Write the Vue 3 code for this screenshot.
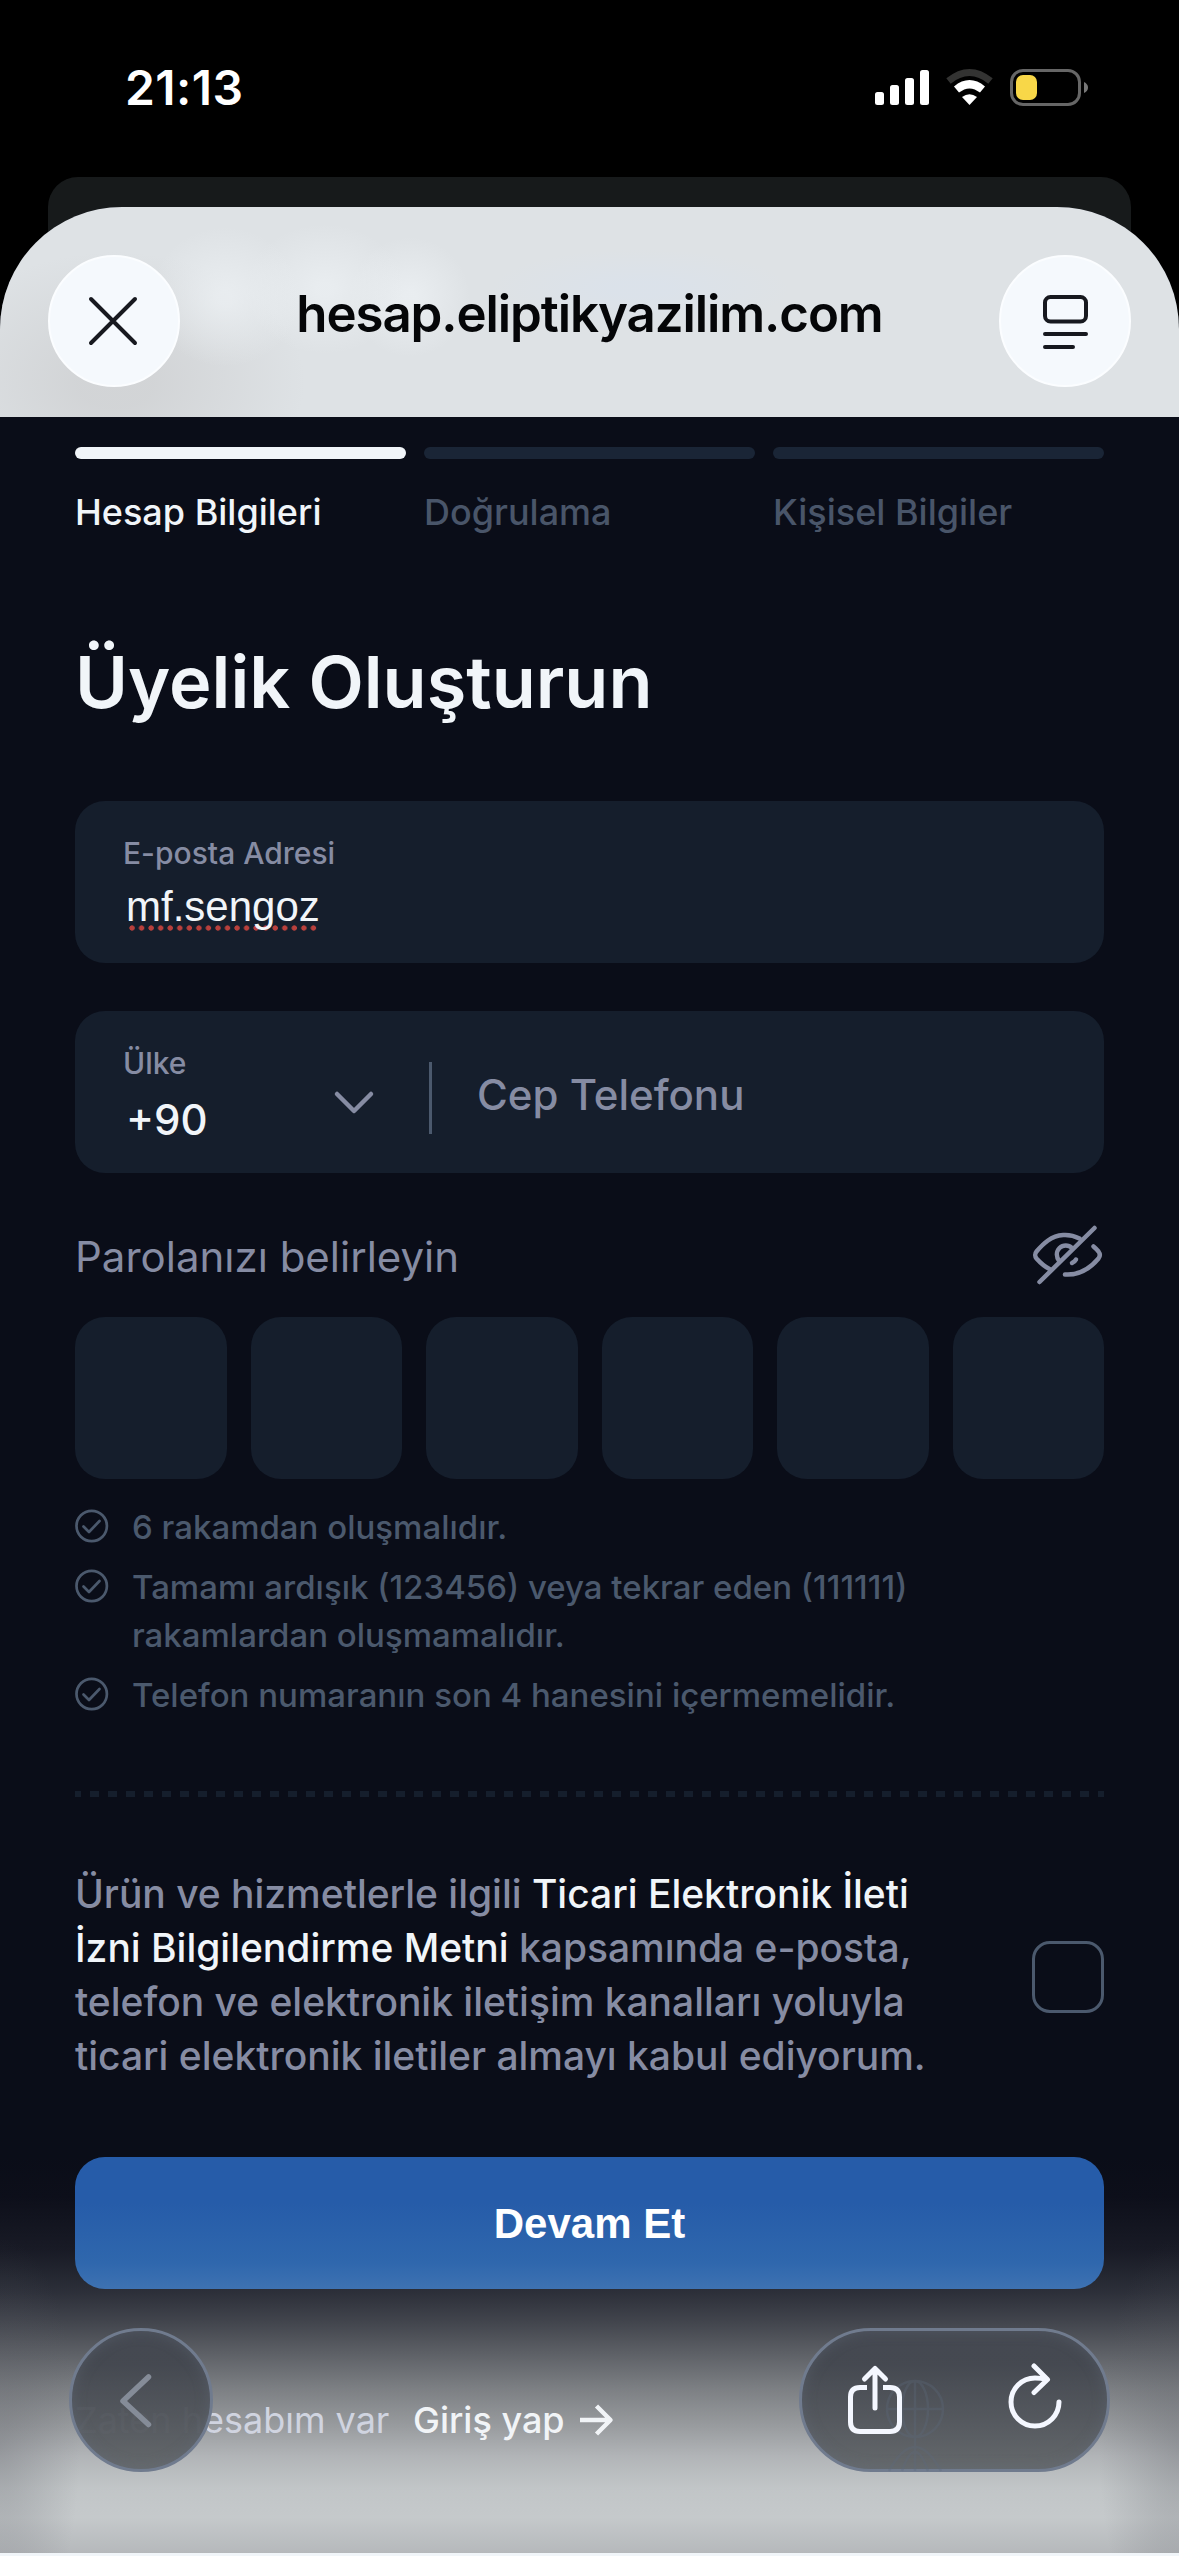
<script setup>
const steps = [
  { label: 'Hesap Bilgileri', active: true },
  { label: 'Doğrulama', active: false },
  { label: 'Kişisel Bilgiler', active: false },
]
const rules = [
  ['6 rakamdan oluşmalıdır.'],
  ['Tamamı ardışık (123456) veya tekrar eden (111111)', 'rakamlardan oluşmamalıdır.'],
  ['Telefon numaranın son 4 hanesini içermemelidir.'],
]
</script>

<template>
  <div class="screen">
    <header class="status">
      <span class="time">21:13</span>
      <svg class="status-icons" width="216" height="40" viewBox="0 0 216 40">
        <g fill="#fff">
          <rect x="1" y="24" width="9" height="13" rx="2.5" />
          <rect x="16" y="17" width="9" height="20" rx="2.5" />
          <rect x="31" y="10" width="9" height="27" rx="2.5" />
          <rect x="46" y="2" width="9" height="35" rx="2.5" />
        </g>
        <path d="M74.500 13Q95.500 -4 116.500 13" fill="none" stroke="#333332" stroke-width="7" />
        <path d="M82.500 21.500Q95.500 11 108.500 21.500" fill="none" stroke="#fff" stroke-width="8" />
        <path d="M88 29Q95.500 23.500 103 29L95.500 37Z" fill="#fff" />
        <rect x="137.500" y="2.500" width="68" height="34" rx="11.500" fill="none" stroke="#666" stroke-width="3" />
        <rect x="142" y="7" width="21" height="25" rx="7" fill="#f8d748" />
        <path d="M210 14Q214 16 214 19.500Q214 23 210 25Z" fill="#777" />
      </svg>
    </header>

    <div class="back-card"></div>

    <main class="sheet">
      <nav class="toolbar">
        <button class="round" aria-label="Kapat">
          <svg class="x-icon" width="60" height="60" viewBox="0 0 60 60"><path d="M8 8L52 52M52 8L8 52" stroke="#17191f" stroke-width="4" stroke-linecap="round" /></svg>
        </button>
        <span class="host">hesap.eliptikyazilim.com</span>
        <button class="round" aria-label="Sayfa">
          <svg width="60" height="60" viewBox="0 0 60 60" fill="none" stroke="#17191f" stroke-width="4" stroke-linecap="round">
            <rect x="10" y="6" width="41" height="24.500" rx="5.500" /><path d="M10 43H51M10 56H38" />
          </svg>
        </button>
      </nav>

      <section class="content">
        <div class="steps">
          <div v-for="s in steps" :key="s.label" class="step" :class="{ active: s.active }">
            <i></i><span>{{ s.label }}</span>
          </div>
        </div>

        <h1><span>Üyelik Oluşturun</span></h1>

        <div class="field">
          <label><span class="l-mail">E-posta Adresi</span></label>
          <div class="value mail"><i class="spell"></i><span class="typed">mf.sengoz</span></div>
        </div>

        <div class="field phone">
          <div class="country">
            <label>Ülke</label>
            <div class="value code">+90</div>
          </div>
          <svg class="chev" width="42" height="26" viewBox="0 0 42 26"><path d="M4 4L21 21L38 4" fill="none" stroke="#868ca3" stroke-width="4.500" stroke-linecap="round" stroke-linejoin="round" /></svg>
          <i class="divider"></i>
          <span class="placeholder">Cep Telefonu</span>
        </div>

        <div class="pass-head">
          <span>Parolanızı belirleyin</span>
          <svg width="72" height="62" viewBox="0 0 72 62" fill="none" stroke="#868ca3" stroke-width="4.500" stroke-linecap="round" stroke-linejoin="round">
            <path d="M63.500 4L8.500 58" />
            <path d="M48.500 14.500C38 9 26 10 17 16.500C12 20 8.500 24 5.500 27.500C3.800 29.500 3.800 32.500 5.500 34.500C9.500 39 13.500 42.500 18.500 45" />
            <path d="M62.500 22.500Q65.500 25 67.500 27.500C69 29.500 69 32.500 67.500 34.500C59 44.500 47 51.500 34 50.500" />
            <path d="M41 24C37.500 20.500 32 20.500 28.500 24C25 27.500 25 33 28.500 37.500" />
            <path d="M45 35.500Q44 37.500 41 39" />
          </svg>
        </div>

        <div class="pins"><i v-for="n in 6" :key="n"></i></div>

        <ul class="rules">
          <li v-for="r in rules" :key="r[0]">
            <svg width="34" height="34" viewBox="0 0 34 34" fill="none" stroke="#4b596d" stroke-width="2.700" stroke-linecap="round" stroke-linejoin="round">
              <circle cx="16.700" cy="17" r="15.200" /><path d="M8.500 17.500L14 23L24.500 12" />
            </svg>
            <p><span v-for="line in r" :key="line">{{ line }}</span></p>
          </li>
        </ul>

        <div class="dashes"></div>

        <div class="consent">
          <p>
            Ürün ve hizmetlerle ilgili <b>Ticari Elektronik İleti</b><br />
            <b>İzni Bilgilendirme Metni</b> kapsamında e-posta,<br />
            telefon ve elektronik iletişim kanalları yoluyla<br />
            ticari elektronik iletiler almayı kabul ediyorum.
          </p>
          <i class="check"></i>
        </div>
      </section>

      <section class="bottom">
        <button class="primary">Devam Et</button>
        <div class="login">
          <span class="muted">Zaten hesabım var</span>
          <span class="go">Giriş yap</span>
          <svg width="36" height="34" viewBox="0 0 36 34"><path d="M1 17H32M17.500 3L31.500 17L17.500 31" fill="none" stroke="#f1f4f7" stroke-width="4.500" stroke-linejoin="round" /></svg>
        </div>
        <button class="glass back" aria-label="Geri">
          <svg width="40" height="60" viewBox="0 0 40 60"><path d="M32.500 6L7 30L32.500 53.500" fill="none" stroke="#858c98" stroke-width="5.500" stroke-linecap="round" stroke-linejoin="round" /></svg>
        </button>
        <div class="glass pill">
          <svg class="ghost" width="90" height="100" viewBox="0 0 90 100" fill="none" stroke="#5d6a7c" stroke-width="2.500" opacity=".32">
            <circle cx="40" cy="36" r="28" /><ellipse cx="40" cy="36" rx="13" ry="28" /><path d="M12 36H68M40 8V98M14 98Q40 50 66 98M27 98Q40 60 53 98" />
          </svg>
          <svg class="share" width="60" height="74" viewBox="0 0 60 74" fill="none" stroke="#f4f7ff" stroke-width="5" stroke-linecap="round" stroke-linejoin="round">
            <path d="M22 25.500H15Q5.500 25.500 5.500 35V60Q5.500 69.500 15 69.500H45Q54.500 69.500 54.500 60V35Q54.500 25.500 45 25.500H38" stroke-linecap="butt" />
            <path d="M30 46V6.500M19.500 17L30 6.500L40.500 17" />
          </svg>
          <svg class="reload" width="60" height="74" viewBox="0 0 60 74" fill="none" stroke="#f4f7ff" stroke-width="5" stroke-linecap="round" stroke-linejoin="round">
            <path d="M54 40A24 24 0 1 1 30 16C34 16 38 16.500 42 17.500M29 4L42.500 17.500L29 30.500" />
          </svg>
        </div>
      </section>
    </main>
  </div>
</template>

<style>
body { margin: 0; background: #000; }
</style>

<style scoped>
* { box-sizing: border-box; }
.screen {
  position: relative; width: 1179px; height: 2556px; overflow: hidden; background: #000;
  font-family: Inter, "Noto Sans", sans-serif; display: flex; flex-direction: column;
}
.status { height: 177px; display: flex; justify-content: space-between; padding: 68px 89px 0 125px; flex: none; }
.time { color: #fff; font-size: 48px; line-height: 40px; font-weight: 600; letter-spacing: 0.4px; }
.back-card { margin: 0 48px; height: 80px; flex: none; border-radius: 30px 30px 0 0; background: #171a1b; }
.sheet { margin-top: -50px; position: relative; flex: 1; display: flex; flex-direction: column; background: #0a0d18; border-radius: 122px 122px 0 0; overflow: hidden; }
button { border: 0; padding: 0; font: inherit; }
.toolbar {
  height: 210px; flex: none; padding: 48px 48px 0; display: flex; justify-content: space-between; align-items: flex-start;
  background:
    radial-gradient(ellipse 75px 70px at 225px 90px, rgba(236,240,243,.75) 10%, rgba(236,240,243,0) 100%),
    radial-gradient(ellipse 80px 65px at 325px 82px, rgba(236,240,243,.75) 10%, rgba(236,240,243,0) 100%),
    radial-gradient(ellipse 60px 60px at 410px 90px, rgba(236,240,243,.8) 10%, rgba(236,240,243,0) 100%),
    radial-gradient(ellipse 150px 40px at 640px 82px, rgba(218,226,236,.7) 20%, rgba(218,226,236,0) 100%),
    radial-gradient(ellipse 190px 130px at 115px 175px, rgba(209,211,213,.9) 20%, rgba(215,218,220,0) 100%),
    #dee2e5;
}
.round { width: 132px; height: 132px; border-radius: 50%; background: #f5f9fd; border: 2px solid #fbfdff; display: flex; align-items: center; justify-content: center; }
.x-icon { margin-left: -2px; }
.host { font-size: 51px; font-weight: 600; line-height: 60px; margin-top: 29px; color: #050608; letter-spacing: -1.1px; white-space: nowrap; }
.content { padding: 30px 75px 0; flex: none; height: 1740px; display: flex; flex-direction: column; }
.steps { display: flex; gap: 18px; }
.step { flex: 1; display: flex; flex-direction: column; color: #495569; font-size: 36px; line-height: 44px; font-weight: 500; }
.step i { height: 12px; border-radius: 6px; background: #1a2536; margin-bottom: 31px; }
.step span { white-space: nowrap; }
.step.active { color: #f1f5f9; }
.step.active i { background: #f1f5f9; }
h1 { margin: 104px 0 0; font-size: 72px; line-height: 88px; height: 88px; font-weight: 600; color: #f1f5f9; white-space: nowrap; }
.field { margin-top: 75px; height: 162px; flex: none; border-radius: 30px; background: #151e2c; padding: 34px 48px 0; }
label { display: block; font-size: 30px; line-height: 36px; font-weight: 500; color: #868ca3; white-space: nowrap; }
.value { color: #f1f5f9; white-space: nowrap; }
.mail { position: relative; width: max-content; font-family: "Liberation Sans", Arial, sans-serif; font-size: 42px; line-height: 48px; margin: 12px 0 0 3px; }
.typed { position: relative; }
.spell { position: absolute; left: 3px; bottom: 0; width: 190px; height: 6px; background: radial-gradient(circle at 3px 3px, #b9403c 2.300px, transparent 3px) 0 0 / 9.550px 6px; }
.phone { margin-top: 48px; display: flex; }
.country { width: 210px; }
.code { font-size: 42px; line-height: 48px; font-weight: 500; margin: 15px 0 0 3px; }
.chev { margin-top: 45px; flex: none; }
.divider { width: 3px; height: 72px; margin: 17px 0 0 54px; background: #4b596d; flex: none; }
.placeholder { margin: 24px 0 0 45px; font-size: 42px; line-height: 52px; font-weight: 500; color: #868ca3; white-space: nowrap; }
.pass-head { margin-top: 51px; height: 93px; display: flex; justify-content: space-between; color: #868ca3; font-size: 42px; line-height: 66px; flex: none; }
.pass-head svg { margin-right: 1px; }
.pins { display: flex; gap: 24px; }
.pins i { flex: 1; height: 162px; border-radius: 30px; background: #151e2c; }
.rules { list-style: none; margin: 25px 0 0; padding: 0; display: flex; flex-direction: column; gap: 12px; }
.rules li { display: flex; gap: 23px; }
.rules svg { margin-top: 5px; flex: none; }
.rules p { margin: -1px 0 1px; display: flex; flex-direction: column; color: #4b596d; font-size: 33px; line-height: 48px; font-weight: 500; white-space: nowrap; }
.dashes { margin-top: 71px; height: 6px; flex: none; background: repeating-linear-gradient(90deg, #151e2c 0 9px, transparent 9px 18px) -3px 0 / 1080px 6px; }
.consent { margin-top: 70px; display: flex; justify-content: space-between; }
.consent p { margin: 0; font-size: 39px; line-height: 54px; font-weight: 500; color: #868ca3; white-space: nowrap; letter-spacing: -0.02px; }
.consent b { font-weight: 500; color: #f1f5f9; }
.check { width: 72px; height: 72px; margin-top: 74px; border: 3px solid #4b596d; border-radius: 18px; flex: none; }
.bottom {
  position: relative; flex: 1; display: flex; flex-direction: column; padding: 0 75px; border-bottom: 3px solid #f1f5f9;
  background:
    radial-gradient(ellipse 80px 210px at 0 290px, rgba(90,92,100,.3), rgba(90,92,100,0)),
    radial-gradient(ellipse 80px 210px at 100% 290px, rgba(90,92,100,.3), rgba(90,92,100,0)),
    linear-gradient(#0a0d18 0, #0d0f1a 40px, #191b26 95px, #2c2f39 135px, #42454d 165px, #5c5f65 195px, #7b7e82 230px, #999c9f 270px, #b2b5b8 300px, #c1c5c7 330px, #c5c9cb 360px, #b4b7ba 399px);
}
.primary {
  height: 132px; flex: none; border-radius: 30px; color: #fff; font: bold 42px/134px "Liberation Sans", Arial, sans-serif;
  background: linear-gradient(#265ca9 0, #265ca9 35%, #2f67ad 80%, #3e72b2 100%);
}
.login { display: flex; align-items: center; height: 48px; margin-top: 107px; font-size: 36px; white-space: nowrap; font-weight: 500; }
.muted { width: 338px; color: #d0d4e0; font-weight: 400; }
.go { color: #f1f4f7; margin-right: 14px; }
.glass {
  position: absolute; top: 171px; height: 144px; border-radius: 72px; border: 3px solid #707b8e;
  background: linear-gradient(rgba(69,73,82,.95), rgba(67,71,79,.95) 25%, rgba(82,86,92,.95) 65%, rgba(97,101,104,.95)) border-box;
  box-shadow: inset 0 0 14px rgba(100,110,125,.4);
}
.back { left: 69px; width: 144px; }
.back svg { position: absolute; left: 44px; top: 40px; }
.pill { left: 799px; width: 311px; }
.pill svg { position: absolute; }
.share { left: 43px; top: 31px; }
.reload { left: 203px; top: 31px; }
.ghost { left: 73px; top: 42px; }
</style>
